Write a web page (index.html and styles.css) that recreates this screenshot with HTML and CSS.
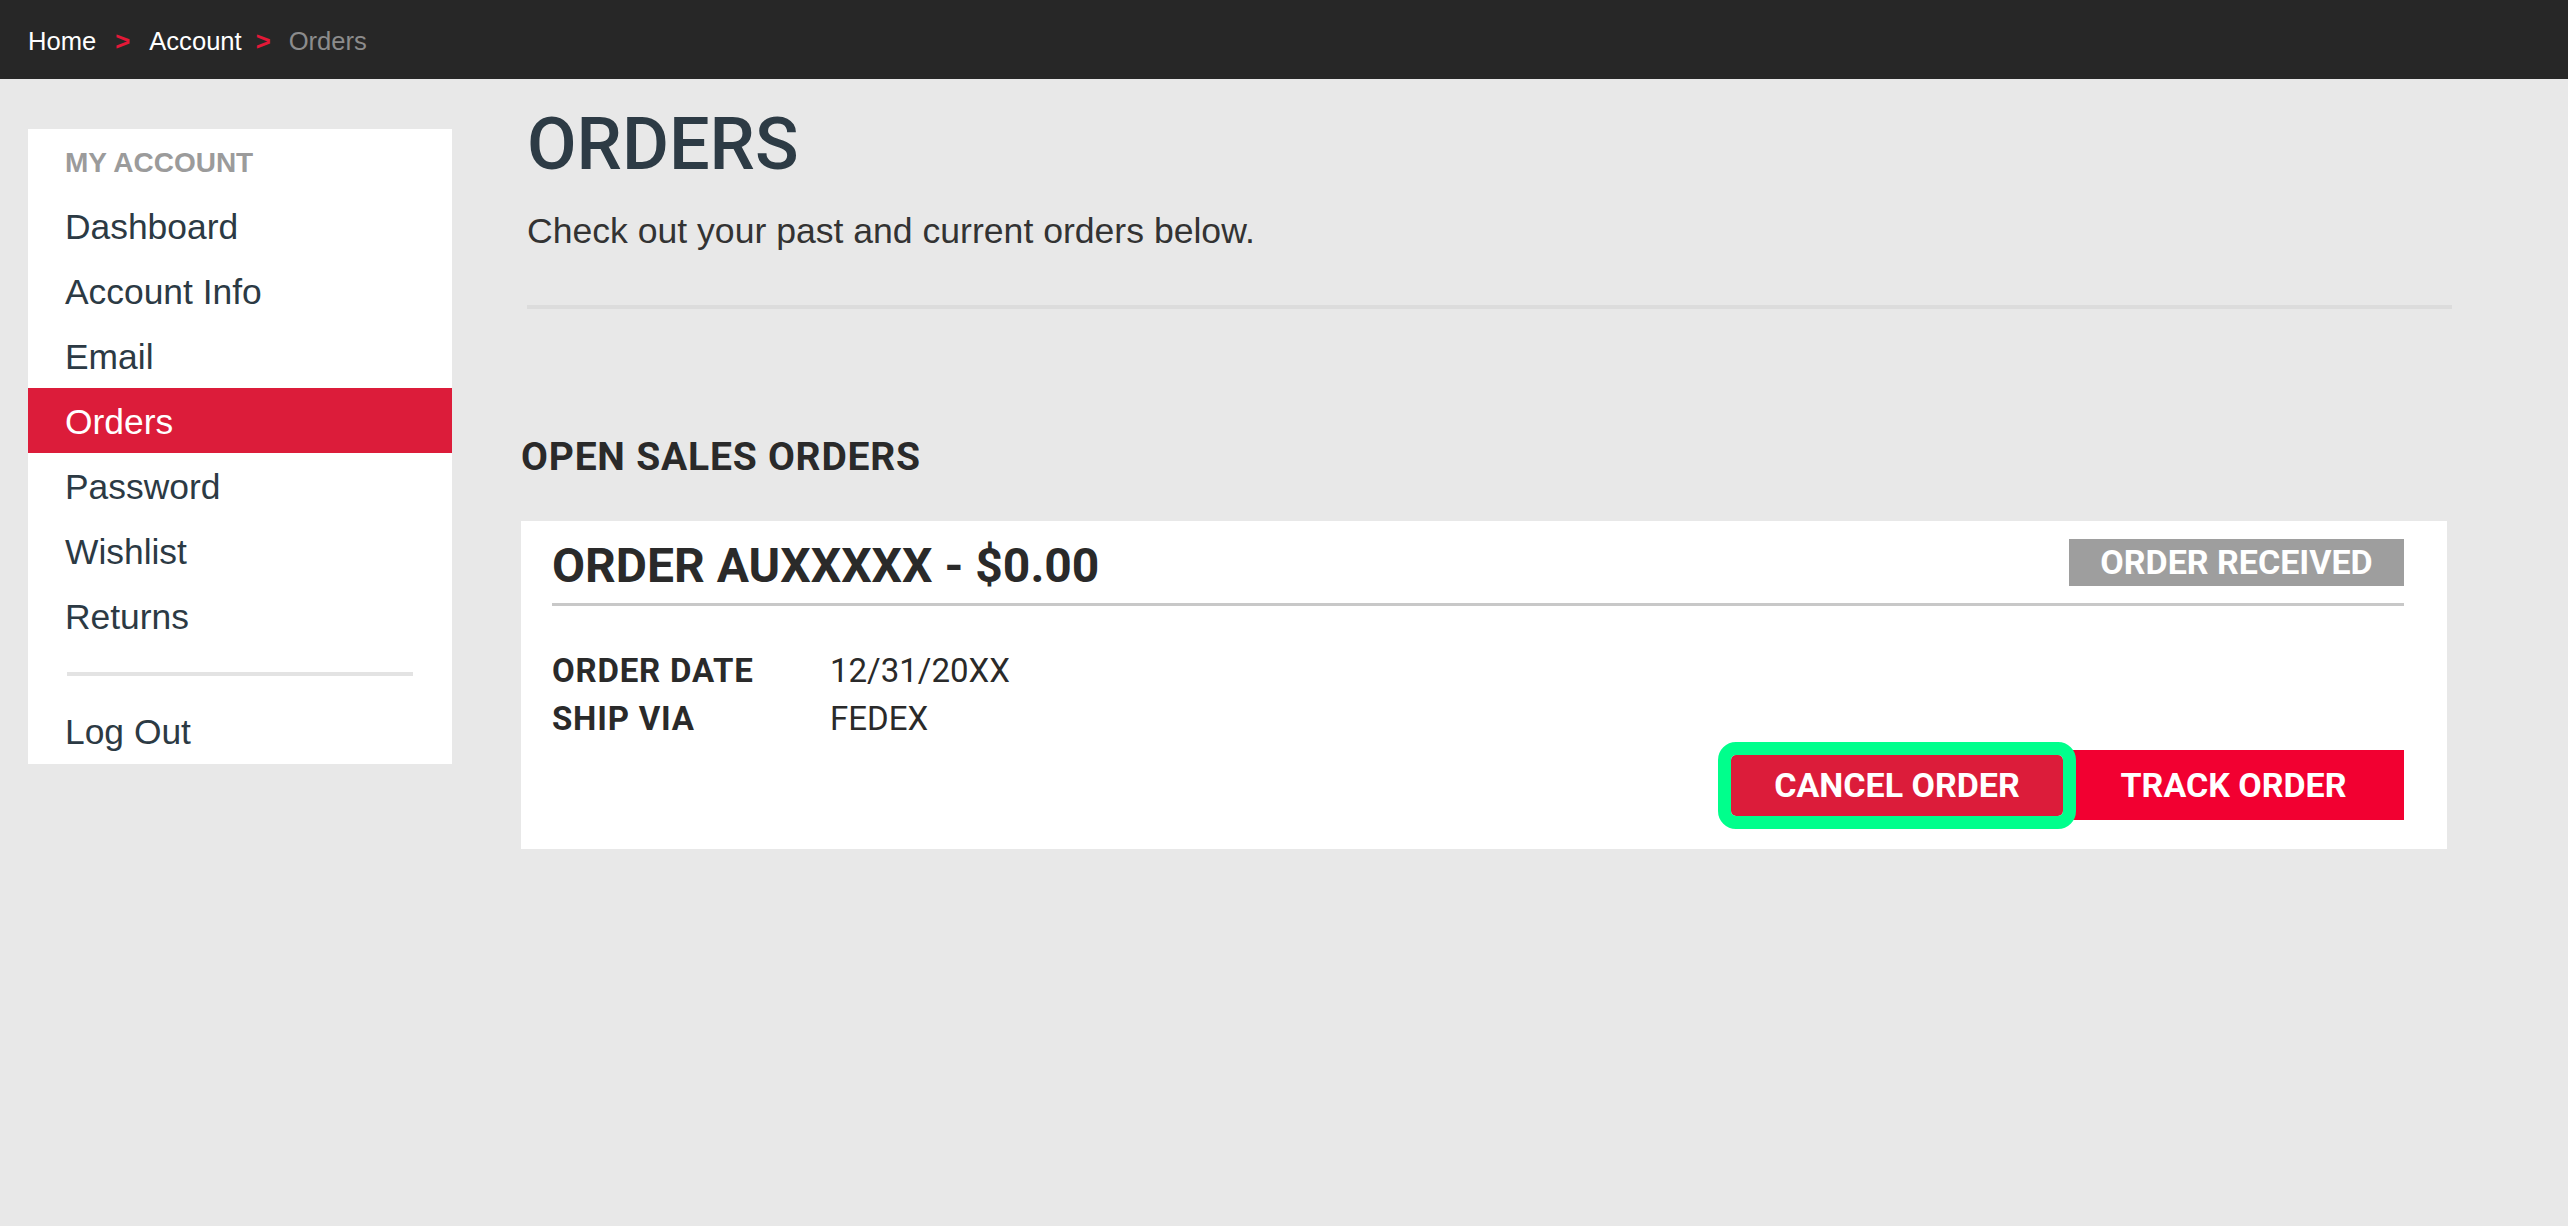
FILE: index.html
```html
<!DOCTYPE html>
<html lang="en">
<head>
<meta charset="utf-8">
<title>Orders</title>
<link rel="stylesheet" href="styles.css">
</head>
<body>
<header class="topbar">
  <nav class="crumbs">
    <a class="crumb" href="#">Home</a><span class="sep sep-wide">&gt;</span><a class="crumb" href="#">Account</a><span class="sep sep-narrow">&gt;</span><span class="crumb current">Orders</span>
  </nav>
</header>
<div class="layout">
  <aside class="sidebar">
    <div class="side-title">MY ACCOUNT</div>
    <ul class="side-menu">
      <li class="side-item">Dashboard</li>
      <li class="side-item">Account Info</li>
      <li class="side-item">Email</li>
      <li class="side-item active">Orders</li>
      <li class="side-item">Password</li>
      <li class="side-item">Wishlist</li>
      <li class="side-item">Returns</li>
    </ul>
    <div class="side-sep"></div>
    <div class="side-item">Log Out</div>
  </aside>
  <main class="main">
    <div class="page-head">
      <h1 class="page-title">ORDERS</h1>
      <p class="page-sub">Check out your past and current orders below.</p>
      <div class="page-rule"></div>
    </div>
    <h2 class="section-title">OPEN SALES ORDERS</h2>
    <section class="card">
      <div class="card-head">
        <div class="card-title">ORDER AUXXXXX - $0.00</div>
        <div class="badge">ORDER RECEIVED</div>
      </div>
      <dl class="details">
        <dt>ORDER DATE</dt><dd>12/31/20XX</dd>
        <dt>SHIP VIA</dt><dd>FEDEX</dd>
      </dl>
      <div class="actions">
        <button class="btn btn-cancel">CANCEL ORDER</button>
        <button class="btn btn-track">TRACK ORDER</button>
      </div>
    </section>
  </main>
</div>
</body>
</html>
```
FILE: styles.css
```css
html, body {
  margin: 0;
  padding: 0;
}
body {
  background: #e8e8e8;
  font-family: "Liberation Sans", Arial, sans-serif;
  min-height: 1226px;
}

.topbar {
  height: 79px;
  background: #272727;
  display: flex;
  align-items: center;
  padding: 3px 0 0 28px;
  box-sizing: border-box;
}
.crumbs {
  font-size: 25.6px;
  line-height: 30px;
  display: flex;
  align-items: center;
}
.crumb {
  color: #ffffff;
  text-decoration: none;
}
.crumb.current {
  color: #8c8c8c;
}
.sep {
  color: #e31837;
  font-weight: bold;
}
.sep-wide {
  margin: 0 19px 0 19px;
}
.sep-narrow {
  margin: 0 18px 0 14px;
}

.layout {
  display: flex;
  align-items: flex-start;
  padding-left: 28px;
  gap: 69px;
}

.sidebar {
  width: 424px;
  margin-top: 50px;
  background: #ffffff;
  padding-top: 17px;
  padding-bottom: 1px;
}
.side-title {
  font-size: 28px;
  font-weight: bold;
  line-height: 34px;
  color: #9b9b9b;
  padding-left: 37px;
  margin-bottom: 13px;
}
.side-menu {
  list-style: none;
  margin: 0;
  padding: 0;
}
.side-item {
  font-size: 35.4px;
  line-height: 62px;
  height: 65px;
  color: #2c3a44;
  padding-left: 37px;
  padding-top: 3px;
  box-sizing: border-box;
}
.side-item.active {
  background: #dc1c3a;
  color: #ffffff;
}
.side-sep {
  height: 4px;
  background: #e3e3e3;
  margin: 24px 39px 22px 39px;
}

.main {
  width: 1931px;
  padding-top: 26px;
}
.page-head {
  margin-left: 6px;
}
.page-title {
  margin: 0;
  font-family: Roboto, "Liberation Sans", sans-serif;
  font-weight: 500;
  font-size: 72px;
  line-height: 80px;
  color: #2d3b45;
}
.page-sub {
  margin: 25px 0 0 0;
  font-size: 35.6px;
  line-height: 42px;
  color: #333333;
}
.page-rule {
  margin-top: 53px;
  height: 4px;
  width: 1925px;
  background: #dcdcdc;
}

.section-title {
  margin: 125px 0 0 0;
  font-family: Roboto, "Liberation Sans", sans-serif;
  font-weight: 700;
  font-size: 39px;
  letter-spacing: 0.8px;
  line-height: 46px;
  color: #2a2a2a;
}

.card {
  margin-top: 41px;
  width: 1926px;
  box-sizing: border-box;
  background: #ffffff;
  padding: 18px 43px 29px 31px;
  font-family: Roboto, "Liberation Sans", sans-serif;
  color: #2a2a2a;
}
.card-head {
  display: flex;
  justify-content: space-between;
  align-items: flex-start;
  padding-bottom: 14px;
  border-bottom: 3px solid #c8c8c8;
}
.card-title {
  font-size: 48px;
  font-weight: 700;
  line-height: 47px;
  margin-top: 3px;
}
.badge {
  background: #9e9e9e;
  color: #ffffff;
  font-size: 34px;
  font-weight: 700;
  line-height: 47px;
  height: 47px;
  width: 335px;
  text-align: center;
}

.details {
  margin: 41px 0 0 0;
  display: grid;
  grid-template-columns: 278px auto;
  font-size: 33px;
  line-height: 48px;
}
.details dt {
  font-weight: 700;
  letter-spacing: 0.8px;
}
.details dd {
  margin: 0;
  font-weight: 400;
}

.actions {
  margin-top: 7px;
  display: flex;
  justify-content: flex-end;
  align-items: center;
  height: 70px;
}
.btn {
  border: none;
  margin: 0;
  padding: 0;
  font-family: Roboto, "Liberation Sans", sans-serif;
  font-size: 34px;
  font-weight: 700;
  color: #ffffff;
  text-align: center;
  cursor: pointer;
}
.btn-cancel {
  position: relative;
  z-index: 1;
  width: 332px;
  height: 61px;
  background: #dc1c3a;
  border-radius: 5px;
  outline: 13px solid #00ff8c;
  outline-offset: 0;
}
.btn-track {
  width: 341px;
  height: 70px;
  background: #f20031;
}
```
